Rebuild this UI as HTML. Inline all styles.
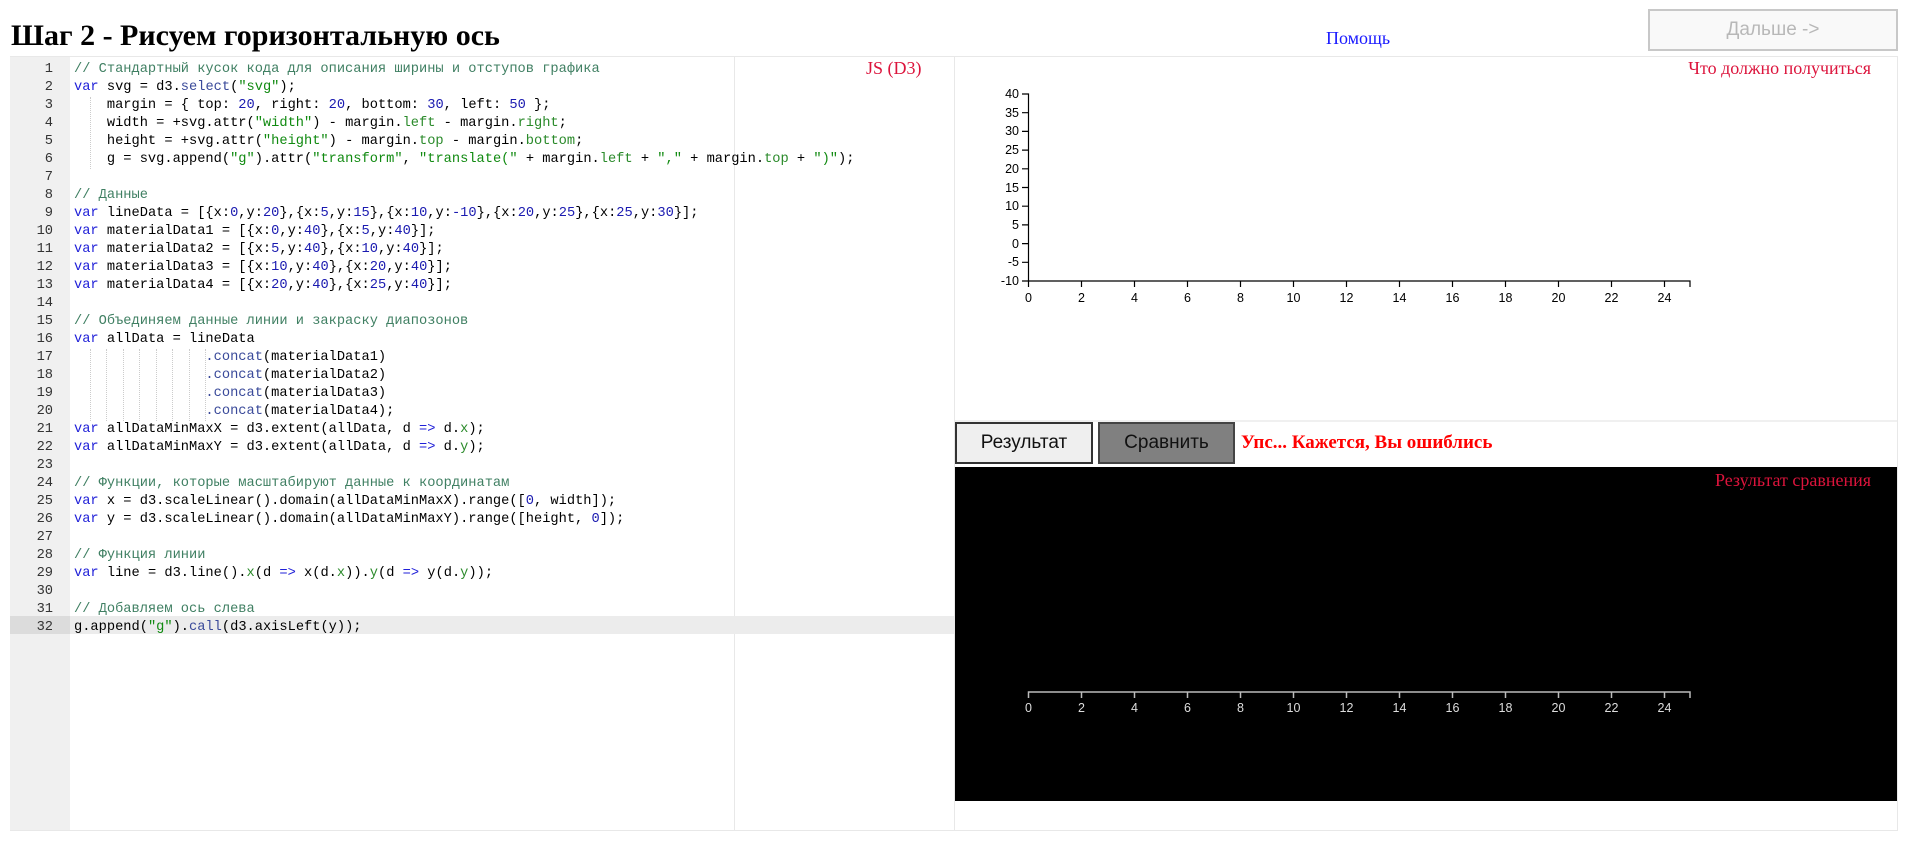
<!DOCTYPE html>
<html><head><meta charset="utf-8">
<style>
*{margin:0;padding:0;box-sizing:border-box}
body{width:1908px;height:860px;background:#fff;position:relative;overflow:hidden;font-family:"Liberation Serif","Noto Serif CJK SC",serif}
.abs{position:absolute}
h1{position:absolute;left:11px;top:18px;font-size:30px;font-weight:bold;line-height:36px;white-space:nowrap}
.help{left:1326px;top:26px;font-size:18px;color:#1a1aff;line-height:24px}
.next{left:1648px;top:9px;width:250px;height:42px;border:2px solid #c8c8c8;background:#f9f9f9;color:#b8b8b8;font:19px "Liberation Sans",sans-serif;text-align:center;line-height:38px}
.editor{left:10px;top:56px;width:945px;height:775px;border:1px solid #e8e8e8;border-right:none}
.gutter{left:10px;top:57px;width:60px;height:773px;background:#f0f0f0}
.pm{left:734px;top:57px;width:1px;height:773px;background:#e8e8e8}
.hl{left:10px;top:616px;width:944px;height:18px;background:#ececec}
.hlg{left:10px;top:616px;width:60px;height:18px;background:#dcdcdc}
.code{left:0;top:61px;font:13.7px/18px "Liberation Mono",monospace;color:#000;white-space:pre}
.ln{display:inline-block;width:53px;text-align:right;color:#333;margin-right:21px}
.c{color:#3f7f62}.k{color:#2020d8}.s{color:#108a10}.n{color:#1a1ab0}.p{color:#2a8a2a}.f{color:#3a4a9a}
.js{left:866px;top:58px;font-size:18px;color:#dc143c}
.right{left:954px;top:56px;width:944px;height:775px;border:1px solid #e8e8e8}
.title2{right:37px;top:58px;font-size:18px;color:#dc143c}
.sep{left:955px;top:420px;width:942px;height:2px;background:#f0f0f0}
.btn{top:422px;height:42px;border:2px solid #333;font:19px "Liberation Sans",sans-serif;text-align:center;line-height:38px;color:#111}
.msg{left:1241px;top:432px;font-size:19px;font-weight:bold;color:#f00}
.black{left:955px;top:467px;width:942px;height:334px;background:#000}
.t3{right:37px;top:470px;font-size:18px;color:#dc143c}
.g{position:absolute;width:0;border-left:1px dotted #ccc}
</style></head><body>
<h1>Шаг 2 - Рисуем горизонтальную ось</h1>
<div class="abs help">Помощь</div>
<div class="abs next">Дальше -&gt;</div>

<div class="abs editor"></div>
<div class="abs gutter"></div>
<div class="abs pm"></div>
<div class="abs hl"></div>
<div class="abs hlg"></div>
<div class="g" style="left:90px;top:97px;height:72px"></div>
<div class="g" style="left:90px;top:349px;height:72px"></div>
<div class="g" style="left:106px;top:349px;height:72px"></div>
<div class="g" style="left:123px;top:349px;height:72px"></div>
<div class="g" style="left:139px;top:349px;height:72px"></div>
<div class="g" style="left:156px;top:349px;height:72px"></div>
<div class="g" style="left:172px;top:349px;height:72px"></div>
<div class="g" style="left:189px;top:349px;height:72px"></div>
<div class="g" style="left:205px;top:349px;height:72px"></div>
<div class="abs js">JS (D3)</div>
<div class="abs code"><span class="ln">1</span><span class="c">// Стандартный кусок кода для описания ширины и отступов графика</span>
<span class="ln">2</span><span class="k">var</span> svg = d3.<span class="f">select</span>(<span class="s">"svg"</span>);
<span class="ln">3</span>    margin = { top: <span class="n">20</span>, right: <span class="n">20</span>, bottom: <span class="n">30</span>, left: <span class="n">50</span> };
<span class="ln">4</span>    width = +svg.attr(<span class="s">"width"</span>) - margin.<span class="p">left</span> - margin.<span class="p">right</span>;
<span class="ln">5</span>    height = +svg.attr(<span class="s">"height"</span>) - margin.<span class="p">top</span> - margin.<span class="p">bottom</span>;
<span class="ln">6</span>    g = svg.append(<span class="s">"g"</span>).attr(<span class="s">"transform"</span>, <span class="s">"translate("</span> + margin.<span class="p">left</span> + <span class="s">","</span> + margin.<span class="p">top</span> + <span class="s">")"</span>);
<span class="ln">7</span>
<span class="ln">8</span><span class="c">// Данные</span>
<span class="ln">9</span><span class="k">var</span> lineData = [{x:<span class="n">0</span>,y:<span class="n">20</span>},{x:<span class="n">5</span>,y:<span class="n">15</span>},{x:<span class="n">10</span>,y:<span class="n">-10</span>},{x:<span class="n">20</span>,y:<span class="n">25</span>},{x:<span class="n">25</span>,y:<span class="n">30</span>}];
<span class="ln">10</span><span class="k">var</span> materialData1 = [{x:<span class="n">0</span>,y:<span class="n">40</span>},{x:<span class="n">5</span>,y:<span class="n">40</span>}];
<span class="ln">11</span><span class="k">var</span> materialData2 = [{x:<span class="n">5</span>,y:<span class="n">40</span>},{x:<span class="n">10</span>,y:<span class="n">40</span>}];
<span class="ln">12</span><span class="k">var</span> materialData3 = [{x:<span class="n">10</span>,y:<span class="n">40</span>},{x:<span class="n">20</span>,y:<span class="n">40</span>}];
<span class="ln">13</span><span class="k">var</span> materialData4 = [{x:<span class="n">20</span>,y:<span class="n">40</span>},{x:<span class="n">25</span>,y:<span class="n">40</span>}];
<span class="ln">14</span>
<span class="ln">15</span><span class="c">// Объединяем данные линии и закраску диапозонов</span>
<span class="ln">16</span><span class="k">var</span> allData = lineData
<span class="ln">17</span>                <span class="f">.concat</span>(materialData1)
<span class="ln">18</span>                <span class="f">.concat</span>(materialData2)
<span class="ln">19</span>                <span class="f">.concat</span>(materialData3)
<span class="ln">20</span>                <span class="f">.concat</span>(materialData4);
<span class="ln">21</span><span class="k">var</span> allDataMinMaxX = d3.extent(allData, d <span class="k">=&gt;</span> d.<span class="p">x</span>);
<span class="ln">22</span><span class="k">var</span> allDataMinMaxY = d3.extent(allData, d <span class="k">=&gt;</span> d.<span class="p">y</span>);
<span class="ln">23</span>
<span class="ln">24</span><span class="c">// Функции, которые масштабируют данные к координатам</span>
<span class="ln">25</span><span class="k">var</span> x = d3.scaleLinear().domain(allDataMinMaxX).range([<span class="n">0</span>, width]);
<span class="ln">26</span><span class="k">var</span> y = d3.scaleLinear().domain(allDataMinMaxY).range([height, <span class="n">0</span>]);
<span class="ln">27</span>
<span class="ln">28</span><span class="c">// Функция линии</span>
<span class="ln">29</span><span class="k">var</span> line = d3.line().<span class="p">x</span>(d <span class="k">=&gt;</span> x(d.<span class="p">x</span>)).<span class="p">y</span>(d <span class="k">=&gt;</span> y(d.<span class="p">y</span>));
<span class="ln">30</span>
<span class="ln">31</span><span class="c">// Добавляем ось слева</span>
<span class="ln">32</span>g.append(<span class="s">"g"</span>).<span class="f">call</span>(d3.axisLeft(y));</div>

<div class="abs right"></div>
<div class="abs title2">Что должно получиться</div>
<svg class="abs" style="left:0;top:0" width="1908" height="860" font-family="Liberation Sans, sans-serif" font-size="12.5">
<g stroke="#000" stroke-width="1.2" fill="none">
<path d="M1022,94H1028.5V281H1022"/>
<path d="M1022,112.7h6M1022,131.4h6M1022,150.1h6M1022,168.8h6M1022,187.5h6M1022,206.2h6M1022,224.9h6M1022,243.6h6M1022,262.3h6"/>
<path d="M1028.5,287V281H1690V287"/>
<path d="M1081.5,281v6M1134.5,281v6M1187.5,281v6M1240.5,281v6M1293.5,281v6M1346.5,281v6M1399.5,281v6M1452.5,281v6M1505.5,281v6M1558.5,281v6M1611.5,281v6M1664.5,281v6"/>
</g>
<g fill="#000" text-anchor="end">
<text x="1019" y="98">40</text><text x="1019" y="117">35</text><text x="1019" y="135">30</text><text x="1019" y="154">25</text><text x="1019" y="173">20</text><text x="1019" y="192">15</text><text x="1019" y="210">10</text><text x="1019" y="229">5</text><text x="1019" y="248">0</text><text x="1019" y="266">-5</text><text x="1019" y="285">-10</text>
</g>
<g fill="#000" text-anchor="middle">
<text x="1028.5" y="302">0</text><text x="1081.5" y="302">2</text><text x="1134.5" y="302">4</text><text x="1187.5" y="302">6</text><text x="1240.5" y="302">8</text><text x="1293.5" y="302">10</text><text x="1346.5" y="302">12</text><text x="1399.5" y="302">14</text><text x="1452.5" y="302">16</text><text x="1505.5" y="302">18</text><text x="1558.5" y="302">20</text><text x="1611.5" y="302">22</text><text x="1664.5" y="302">24</text>
</g>
</svg>
<div class="abs sep"></div>
<div class="abs btn" style="left:955px;width:138px;background:#efefef">Результат</div>
<div class="abs btn" style="left:1098px;width:137px;background:#808080;border-color:#444">Сравнить</div>
<div class="abs msg">Упс... Кажется, Вы ошиблись</div>
<div class="abs black"></div>
<div class="abs t3">Результат сравнения</div>
<svg class="abs" style="left:0;top:0" width="1908" height="860" font-family="Liberation Sans, sans-serif" font-size="12.5">
<g stroke="#bbb" stroke-width="1.5" fill="none">
<path d="M1028.5,698V692H1690V698"/>
<path d="M1081.5,692v6M1134.5,692v6M1187.5,692v6M1240.5,692v6M1293.5,692v6M1346.5,692v6M1399.5,692v6M1452.5,692v6M1505.5,692v6M1558.5,692v6M1611.5,692v6M1664.5,692v6"/>
</g>
<g fill="#ddd" text-anchor="middle">
<text x="1028.5" y="712">0</text><text x="1081.5" y="712">2</text><text x="1134.5" y="712">4</text><text x="1187.5" y="712">6</text><text x="1240.5" y="712">8</text><text x="1293.5" y="712">10</text><text x="1346.5" y="712">12</text><text x="1399.5" y="712">14</text><text x="1452.5" y="712">16</text><text x="1505.5" y="712">18</text><text x="1558.5" y="712">20</text><text x="1611.5" y="712">22</text><text x="1664.5" y="712">24</text>
</g>
</svg>
</body></html>
